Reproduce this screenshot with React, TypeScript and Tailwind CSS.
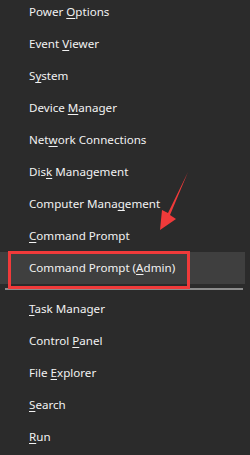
const top = [
  ["Power ", "O", "ptions"],
  ["Event ", "V", "iewer"],
  ["S", "y", "stem"],
  ["Device ", "M", "anager"],
  ["Net", "w", "ork Connections"],
  ["Dis", "k", " Management"],
  ["Computer Mana", "g", "ement"],
  ["", "C", "ommand Prompt"],
  ["Command Prompt (", "A", "dmin)"],
];

const bottom = [
  ["", "T", "ask Manager"],
  ["Control ", "P", "anel"],
  ["File ", "E", "xplorer"],
  ["", "S", "earch"],
  ["", "R", "un"],
];

function Item({ parts, active }: { parts: string[]; active?: boolean }) {
  return (
    <div className={"flex h-[32px] items-center pl-[29px] " + (active ? "bg-[#3f3f3f]" : "")}>
      <span className="whitespace-nowrap">
        {parts[0]}
        <span className="underline decoration-1 underline-offset-[2px]">{parts[1]}</span>
        {parts[2]}
      </span>
    </div>
  );
}

export default function App() {
  return (
    <div
      className="relative h-[455px] w-[250px] overflow-hidden bg-[#2b2b2b] text-[11.6px] text-[#f2f2f2]"
      style={{ fontFamily: '"Noto Sans", "Open Sans", sans-serif' }}
    >
      <div className="-mt-1 flex flex-col pr-[5px]">
        {top.map((p, i) => (
          <Item key={i} parts={p} active={i === 8} />
        ))}
        {/* separator */}
        <div className="flex h-[9px] items-center pl-[5px] pr-[2px]">
          <div className="h-[2px] w-full bg-[#8c8c8c]" />
        </div>
        {bottom.map((p, i) => (
          <Item key={i} parts={p} />
        ))}
      </div>

      {/* annotation: red box */}
      <div className="absolute left-[8px] top-[251px] h-[38px] w-[182px] border-[3px] border-[#f03a3a]" />

      {/* annotation: arrow */}
      <svg className="absolute left-0 top-0" width="250" height="455" viewBox="0 0 250 455">
        <polygon points="188,172 170,215 176,219 160,230 162,210 168,213" fill="#f03a3a" />
      </svg>
    </div>
  );
}
